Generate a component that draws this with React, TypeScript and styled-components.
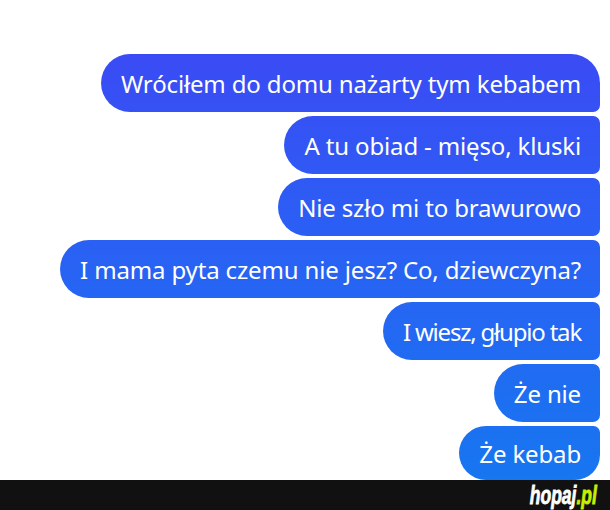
import React from "react";
import styled, { createGlobalStyle } from "styled-components";

const GlobalStyle = createGlobalStyle`
   html, body {
      margin: 0;
      padding: 0;
      background: #ffffff;
   }
`;

const Page = styled.div`
   width: 610px;
   height: 510px;
   display: flex;
   flex-direction: column;
   overflow: hidden;
`;

const Chat = styled.div`
   height: 480px;
   display: flex;
   flex-direction: column;
   align-items: flex-end;
   gap: 4px;
   padding: 54px 10px 0 0;
   box-sizing: border-box;
`;

const Bubble = styled.div<{ $first?: boolean; $last?: boolean; $spacing?: number }>`
   height: ${(p) => (p.$last ? "54px" : "58px")};
   flex-shrink: 0;
   display: flex;
   align-items: center;
   padding: 0 19px 0 20px;
   box-sizing: border-box;
   color: #ffffff;
   font-family: "Noto Sans", "Open Sans", sans-serif;
   font-size: 24px;
   letter-spacing: ${(p) => (p.$spacing ?? -0.15)}px;
   white-space: nowrap;
   background: linear-gradient(to bottom, #3f45f5 0px, #2a60f4 240px, #1776f0 480px);
   background-attachment: fixed;
   border-radius: 29px ${(p) => (p.$first ? "29px" : "7px")} ${(p) => (p.$last ? "27px" : "7px")} 29px;
`;

const Footer = styled.div`
   height: 30px;
   background: #111111;
   display: flex;
   align-items: center;
   justify-content: flex-end;
   padding-right: 13px;
`;

const Logo = styled.div`
   font-family: "Liberation Sans", Arial, sans-serif;
   font-weight: 700;
   font-style: italic;
   font-size: 25px;
   line-height: 1;
   color: #ffffff;
   -webkit-text-stroke: 0.8px currentColor;
   transform: scaleX(0.7);
   transform-origin: right center;

   span {
      color: #c9ef00;
   }
`;

const messages: { text: string; spacing?: number }[] = [
   { text: "Wróciłem do domu nażarty tym kebabem" },
   { text: "A tu obiad - mięso, kluski" },
   { text: "Nie szło mi to brawurowo" },
   { text: "I mama pyta czemu nie jesz? Co, dziewczyna?" },
   { text: "I wiesz, głupio tak", spacing: -1.2 },
   { text: "Że nie" },
   { text: "Że kebab" },
];

const App = () => {
   return (
      <>
         <GlobalStyle />
         <Page>
            <Chat>
               {messages.map((m, i) => (
                  <Bubble
                     key={i}
                     $first={i === 0}
                     $last={i === messages.length - 1}
                     $spacing={m.spacing}
                  >
                     {m.text}
                  </Bubble>
               ))}
            </Chat>
            <Footer>
               <Logo>
                  hopaj<span>.pl</span>
               </Logo>
            </Footer>
         </Page>
      </>
   );
};

export default App;
